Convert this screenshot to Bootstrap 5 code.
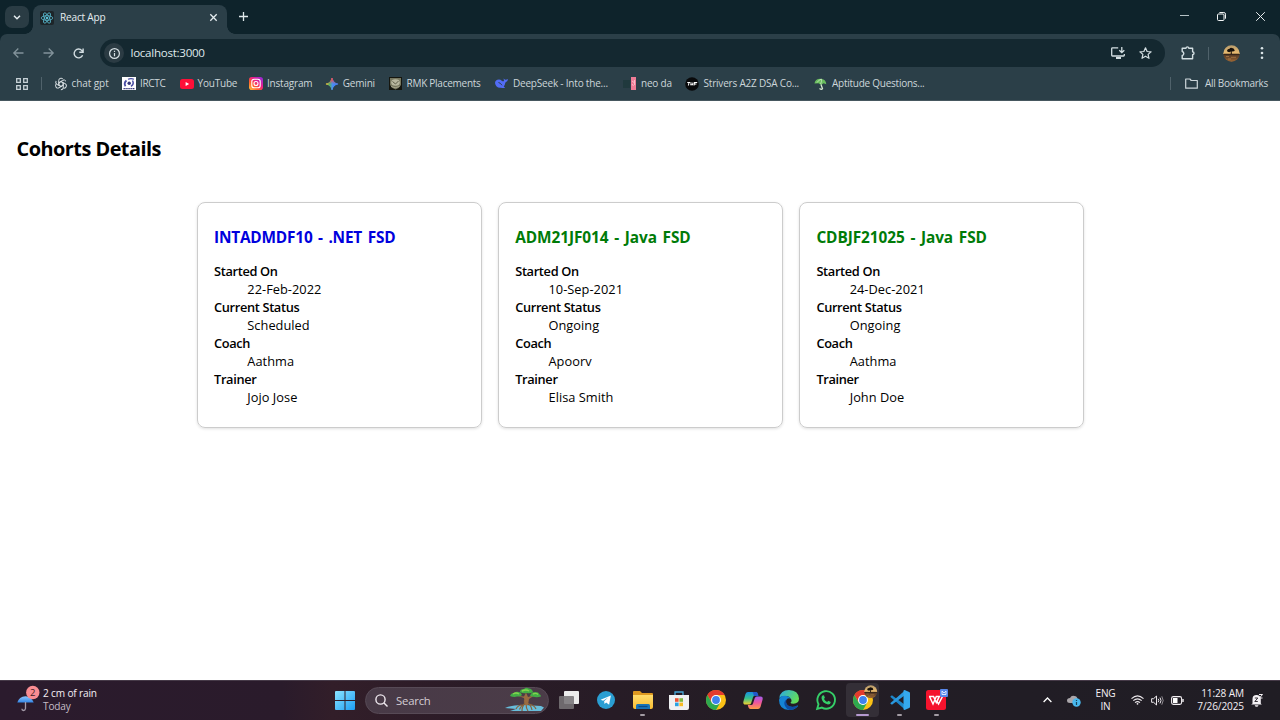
<!DOCTYPE html>
<html lang="en">
<head>
<meta charset="utf-8">
<title>React App</title>
<link rel="stylesheet" href="https://cdn.jsdelivr.net/npm/bootstrap@5.3.0/dist/css/bootstrap.min.css">
<style>
body{font-family:"Open Sans","Noto Sans",sans-serif;width:1280px;height:720px;overflow:hidden;background:#fff;color:#000}
svg{display:block;flex:none;overflow:visible}
.tabstrip{height:34px;background:#0e232b}
.tabsearch{width:24px;height:22px;border-radius:7px;background:#2a3c44;margin:6px 0 0 5px}
.browsertab{width:194px;height:29px;margin:5px 0 0 4px;padding-bottom:4px;background:#2b3f48;border-radius:8px 8px 0 0;font-size:10.1px;letter-spacing:-.2px;color:#e4ecef}
.browsertab::before,.browsertab::after{content:"";position:absolute;bottom:0;width:8px;height:8px}
.browsertab::before{left:-8px;background:radial-gradient(circle at 0 0,transparent 7.5px,#2b3f48 8px)}
.browsertab::after{right:-8px;background:radial-gradient(circle at 100% 0,transparent 7.5px,#2b3f48 8px)}
.toolstrip{background:#2b3f48;height:38px;position:relative;border-radius:7px 7px 0 0}
.toolwrap{background:#0e232b}
.address{width:1065px;height:28px;border-radius:14px;background:#142830;color:#dfe7ea;font-size:11.6px}
.infodot{width:20px;height:20px;border-radius:50%;background:#2b3b43}
.bookmarks{height:29px;background:#2b3f48;border-bottom:1px solid #46575f;color:#cdd6da;font-size:10px;letter-spacing:-.2px;padding-bottom:5px}
.bm{gap:4px;white-space:nowrap}
.vbar{width:1px;height:13px;background:#50626b}
.page{height:579px}
.page h1{font-size:19.9px;font-weight:700;line-height:28px;margin:0;padding:34px 0 0 16.5px;letter-spacing:-.52px}
.cohorts{margin:39px 0 0 197px;gap:16.4px}
.cohort{width:284.8px;height:226px;border:1px solid #ccc;border-radius:8px;box-shadow:0 1px 3px rgba(0,0,0,.12);padding:25px 16px 0}
.cohort h2{font-size:15.4px;font-weight:700;line-height:20px;margin:0 0 14px;white-space:nowrap;color:#007b08;letter-spacing:-.08px;word-spacing:1.8px}
.cohort h2.scheduled{color:#00d;letter-spacing:-.2px}
.cohort dl{font-size:12.8px;line-height:18px;margin:0}
.cohort dt{font-weight:600;letter-spacing:-.34px}
.cohort dd{margin:0 0 0 33.3px;letter-spacing:.03px}
.taskbar{height:40px;padding-bottom:1px;background:linear-gradient(90deg,#2b1b2d 0,#2a1b2b 22%,#321e29 26%,#2a1b27 38%,#241d25 58%,#211d25 80%,#201d24 100%);border-top:1px solid #463a48;color:#f4eff4;font-size:10.1px;line-height:13px}
.searchbox{width:184px;height:27px;border-radius:14px;background:linear-gradient(90deg,#483a47,#4b3c48);border:1px solid #574a56;font-size:11.3px;color:#d5cdd4}
.app{width:36.7px;height:38px;position:relative}
.app i{position:absolute;bottom:3px;left:50%;width:5px;height:2.4px;margin-left:-2.5px;border-radius:2px;background:#a39ca4}
.app.active::before{content:"";position:absolute;inset:2px 2px 2px 1px;border-radius:4px;background:#342f37}
.app.active i{width:13px;margin-left:-6.5px;background:#b59ad0}
.app svg{position:relative}
.at{position:absolute}
</style>
</head>
<body>
<svg width="0" height="0" class="at"><defs>
<linearGradient id="win" x1="0" y1="0" x2="1" y2="1"><stop stop-color="#8be4ff"/><stop offset="1" stop-color="#1c9cf3"/></linearGradient>
<linearGradient id="insta" x1="0" y1="1" x2="1" y2="0"><stop stop-color="#ffc83a"/><stop offset=".35" stop-color="#ff5a2c"/><stop offset=".6" stop-color="#ea1d8c"/><stop offset="1" stop-color="#8a2be8"/></linearGradient>
<linearGradient id="gem" x1="0" y1="0" x2="1" y2="0"><stop stop-color="#f5c331"/><stop offset=".3" stop-color="#53b26b"/><stop offset=".55" stop-color="#4a8df5"/><stop offset="1" stop-color="#3f7cf0"/></linearGradient>
<linearGradient id="gemr" x1="0" y1="0" x2="0" y2="1"><stop stop-color="#f0484b"/><stop offset=".5" stop-color="#f0484b" stop-opacity="0"/></linearGradient>
<linearGradient id="fold" x1="0" y1="0" x2="0" y2="1"><stop stop-color="#ffdc6b"/><stop offset="1" stop-color="#f8bd32"/></linearGradient>
<linearGradient id="cpl" x1="0" y1="0" x2="0" y2="1"><stop stop-color="#168fe5"/><stop offset=".5" stop-color="#35c28d"/><stop offset="1" stop-color="#f4d02c"/></linearGradient>
<linearGradient id="cpr" x1="0" y1="0" x2="0" y2="1"><stop stop-color="#a15cf0"/><stop offset=".5" stop-color="#f0559b"/><stop offset="1" stop-color="#ff9c45"/></linearGradient>
<linearGradient id="edg" x1="0" y1="0" x2="1" y2=".5"><stop stop-color="#29a9e6"/><stop offset="1" stop-color="#63dd59"/></linearGradient>
<linearGradient id="umb" x1="0" y1="0" x2="0" y2="1"><stop stop-color="#8cc6ff"/><stop offset="1" stop-color="#3487e6"/></linearGradient>
<linearGradient id="dusk" x1="0" y1="0" x2="0" y2="1"><stop stop-color="#b59a6c"/><stop offset=".5" stop-color="#edbd70"/><stop offset=".54" stop-color="#4d3524"/><stop offset=".75" stop-color="#6e4a2b"/><stop offset="1" stop-color="#a36a34"/></linearGradient>
<symbol id="chrome" viewBox="0 0 20 20"><circle cx="10" cy="10" r="10" fill="#fbc116"/><path d="M10 5h8.660A10 10 0 0 0 1.340 5l4.330 7.500z" fill="#e33b2e"/><path d="M1.340 5A10 10 0 0 0 10 20l4.330-7.500h-8.660z" fill="#2da94f"/><circle cx="10" cy="10" r="5" fill="#fff"/><circle cx="10" cy="10" r="3.900" fill="#3f82ee"/></symbol>
<symbol id="face" viewBox="0 0 17 17"><circle cx="8.500" cy="8.500" r="8.200" fill="url(#dusk)"/><path d="M4 5.500q.5-1.800 2.500-1.800Q7.500 2.300 9 3q2 0 2.200 1.500Q12.500 5.500 11 6.300L8.700 6.500l.2 2.500H7.700l.1-2.500-1.500.8Q4 7.200 4 5.500" fill="#17100b"/><path d="M.8 9.200h15.400" stroke="#2b1d14" stroke-width=".9"/><path d="M3 11.500h3M8 12.300h5M5 14h3" stroke="#c08a50" stroke-width=".6"/></symbol>
</defs></svg>

<header>
<div class="tabstrip d-flex">
  <div class="tabsearch d-flex align-items-center justify-content-center"><svg width="8" height="5" viewBox="0 0 8 5" fill="none" stroke="#e6edf0" stroke-width="1.5"><path d="m1 .8 3 3 3-3"/></svg></div>
  <div class="browsertab d-flex align-items-center position-relative">
    <svg style="margin-left:7px;margin-right:6px" width="14" height="14" viewBox="0 0 14 14"><rect width="14" height="14" rx="2" fill="#1d2529"/><g fill="none" stroke="#5cc3da" stroke-width=".75"><ellipse cx="7" cy="7" rx="5.8" ry="2.3"/><ellipse cx="7" cy="7" rx="5.8" ry="2.3" transform="rotate(60 7 7)"/><ellipse cx="7" cy="7" rx="5.8" ry="2.3" transform="rotate(120 7 7)"/></g><circle cx="7" cy="7" r="1.2" fill="#5cc3da"/></svg>
    <span>React App</span>
    <svg class="ms-auto" style="margin-right:10.5px" width="7" height="7" viewBox="0 0 7 7" stroke="#e6edf0" stroke-width="1.3"><path d="m.3.3 6.4 6.4M6.7.3.3 6.7"/></svg>
  </div>
  <svg style="margin:12px 0 0 12px" width="9" height="9" viewBox="0 0 9 9" stroke="#dfe8eb" stroke-width="1.3"><path d="M4.5 0v9M0 4.500h9"/></svg>
  <div class="ms-auto d-flex align-items-center" style="padding:0 15px 2px 0">
    <svg width="9" height="9" viewBox="0 0 9 9" stroke="#b6c2c7" stroke-width="1"><path d="M0 3.500h9"/></svg>
    <svg style="margin-left:28px" width="9" height="9" viewBox="0 0 9 9" fill="none" stroke="#f4f7f8" stroke-width="1"><rect x=".5" y="2" width="6.5" height="6.5" rx="1"/><path d="M2.400 .5h4.400q1.700 0 1.700 1.700v4.500"/></svg>
    <svg style="margin-left:30px" width="9" height="9" viewBox="0 0 9 9" stroke="#e9eef0" stroke-width="1"><path d="m.2.2 8.600 8.600M8.800.2.2 8.800"/></svg>
  </div>
</div>
<div class="toolwrap"><div class="toolstrip d-flex align-items-center">
  <svg style="margin-left:13px" width="11" height="10" viewBox="0 0 11 10" fill="none" stroke="#82939b" stroke-width="1.3"><path d="M10.500 5H1M5.300.5.8 5l4.500 4.500"/></svg>
  <svg style="margin-left:19px" width="11" height="10" viewBox="0 0 11 10" fill="none" stroke="#82939b" stroke-width="1.3"><path d="M.5 5H10M5.700.5 10.200 5 5.700 9.500"/></svg>
  <svg style="margin-left:19px" width="11" height="11" viewBox="0 0 11 11" fill="none" stroke="#d3dee2" stroke-width="1.4"><path d="M9.600 7.200A4.400 4.400 0 1 1 8.900 2.600L10 3.800M10.100.4v3.900H6.300"/></svg>
  <div class="address d-flex align-items-center" style="margin-left:16px">
    <div class="infodot d-flex align-items-center justify-content-center" style="margin-left:4px"><svg width="11" height="11" viewBox="0 0 11 11" fill="none" stroke="#d6e0e4" stroke-width="1.200"><circle cx="5.500" cy="5.500" r="4.900"/><path d="M5.500 5v3.200M5.500 2.700V4"/></svg></div>
    <span style="margin-left:6.500px;letter-spacing:-.28px">localhost:3000</span>
    <svg class="ms-auto" width="14" height="12" viewBox="0 0 14 12" fill="none" stroke="#d3dee2" stroke-width="1.300"><path d="M7.200.8H1.400Q.7.8.7 1.500v6.800q0 .7.700.7h11.200q.7 0 .7-.7V7M10.800 0v5.300M8.300 3.200l2.500 2.500 2.500-2.500"/><path d="M5 11h5" stroke-width="2"/></svg>
    <svg style="margin:0 13.500px 0 13.500px" width="13" height="12" viewBox="0 0 13 12" fill="none" stroke="#d3dee2" stroke-width="1.200" stroke-linejoin="round"><path d="m6.500.8 1.600 3.700 4 .3-3 2.600.9 3.900-3.500-2.100L3 11.300l.9-3.900-3-2.600 4-.3z"/></svg>
  </div>
  <svg style="margin-left:15.500px" width="14" height="14" viewBox="0 0 14 14" fill="none" stroke="#d3dee2" stroke-width="1.400" stroke-linejoin="round"><path d="M1.200 2.200h3.800q.2-1.300 1.400-1.300t1.400 1.300h3.800v3.600q1.400.2 1.400 1.500t-1.400 1.500v4H1.200V9.500Q2.800 9.200 2.800 7.500T1.200 5.500z"/></svg>
  <div class="vbar" style="margin-left:13.500px"></div>
  <svg style="margin-left:13.500px" width="17" height="17"><use href="#face"/></svg>
  <svg style="margin-left:20px" width="4" height="12" viewBox="0 0 4 12" fill="#dbe5e8"><circle cx="2" cy="1.300" r="1.300"/><circle cx="2" cy="6" r="1.300"/><circle cx="2" cy="10.700" r="1.300"/></svg>
</div></div>
<div class="bookmarks d-flex align-items-center">
  <svg style="margin-left:16px" width="12" height="12" viewBox="0 0 12 12" fill="none" stroke="#c6d1d6" stroke-width="1.300"><path d="M.7.7h3.600v3.600H.7zM7.700.7h3.600v3.600H7.700zM.7 7.700h3.600v3.600H.7zM7.700 7.700h3.600v3.600H7.700z"/></svg>
  <div class="vbar" style="margin:0 12px 0 12.500px"></div>
  <div class="bm d-flex align-items-center" style="width:68.500px"><svg width="14" height="14" viewBox="0 0 14 14" fill="none" stroke="#dce3e6" stroke-width=".95"><g id="petal"><path d="M4.700 8.300V3.600Q4.700 1.200 7 1.200q1.500 0 2.300 1.200M4.700 5.700 8.800 3.300q2-1 3.200 1"/></g><use href="#petal" transform="rotate(120 7 7)"/><use href="#petal" transform="rotate(240 7 7)"/><path d="m7 4.700 2 1.150v2.300L7 9.300 5 8.150v-2.300z"/></svg><span style="letter-spacing:-.08px">chat gpt</span></div>
  <div class="bm d-flex align-items-center" style="width:57.500px"><svg width="14" height="13" viewBox="0 0 14 13"><path fill="#fff" d="M0 0h14v13H0z"/><g fill="none" stroke="#4a4fa5"><path d="M3.500 9.200Q1.500 6 4.500 3.500" stroke-width="1.800"/><path d="M10.500 3.500Q12.500 7 9 9.300" stroke-width="1.500"/><path d="M6 2.200q3-1.200 6 0" stroke-width="1.200"/></g><circle cx="7.200" cy="6.300" r="1.700" fill="#34367a"/><path d="M1.500 11.700h11" stroke="#34367a" stroke-width="1.300" stroke-dasharray="1.400 .5"/></svg><span style="letter-spacing:-.3px">IRCTC</span></div>
  <div class="bm d-flex align-items-center" style="width:69.500px"><svg width="14" height="10" viewBox="0 0 14 10"><rect width="14" height="10" rx="2.500" fill="#ff0f38"/><path d="m5.600 3 3.600 2-3.600 2z" fill="#fff"/></svg><span>YouTube</span></div>
  <div class="bm d-flex align-items-center" style="width:76.800px"><svg width="14" height="13" viewBox="0 0 14 13"><rect width="14" height="13" rx="2.800" fill="url(#insta)"/><g fill="none" stroke="#fff" stroke-width="1.100"><rect x="2.800" y="2.300" width="8.400" height="8.400" rx="2.300"/><circle cx="7" cy="6.500" r="2"/></g></svg><span>Instagram</span></div>
  <div class="bm d-flex align-items-center" style="width:63.200px;gap:5px"><svg width="12" height="12" viewBox="0 0 12 12"><path d="M6 0Q6.700 5.300 12 6 6.700 6.700 6 12 5.300 6.700 0 6 5.300 5.300 6 0" fill="url(#gem)" stroke="url(#gem)" stroke-width="1.200"/><path d="M6 0Q6.700 5.300 12 6 6.700 6.700 6 12 5.300 6.700 0 6 5.300 5.300 6 0" fill="url(#gemr)" stroke="url(#gemr)" stroke-width="1.200"/></svg><span>Gemini</span></div>
  <div class="bm d-flex align-items-center" style="width:106px;gap:4.500px"><svg width="13" height="13" viewBox="0 0 13 13"><path fill="#15160f" d="M0 0h13v13H0z"/><path d="M1 1h11v7q-2 3.500-5.500 4.500Q3 11.500 1 8z" fill="#77775f"/><ellipse cx="6.500" cy="5.500" rx="4.300" ry="3.300" fill="#b8b79f"/><path d="m3.500 4.500 3 2.500 3-3" fill="none" stroke="#55553f" stroke-width=".9"/><path d="M2 9.500q4 2.500 8.500 0" fill="none" stroke="#a8a68c"/></svg><span style="letter-spacing:-.26px">RMK Placements</span></div>
  <div class="bm d-flex align-items-center" style="width:128.500px;gap:5px"><svg width="13" height="11" viewBox="0 0 13 11"><path d="M0 5Q.2 1.700 4 1.500q1.700 0 2.700 1.200Q8 3.600 9 3q0-1.600-.6-2.600 1.100.7 1.900 1.400Q11.500 2 13 1q-.2 3-2.600 3.600Q10 7 8.700 8.500l1.500 1.200Q7.500 10.500 6.200 9.700 1 10.500 0 5" fill="#526cf5"/><path d="M3.500 4.500q2 .3 3.500 2.800" fill="none" stroke="#2b3f48" stroke-width="1"/></svg><span>DeepSeek - Into the...</span></div>
  <div class="bm d-flex align-items-center" style="width:62px;gap:4.500px"><svg width="13" height="13" viewBox="0 0 13 13"><path fill="#20393d" d="M0 3h7v8H0z"/><path fill="#ef7c96" d="M8 0h5v13H8z"/><path d="m9 4 2 1.500M11.500 3v5M9 7l1.500 2" stroke="#fbc9d4" stroke-width=".8"/></svg><span>neo da</span></div>
  <div class="bm d-flex align-items-center" style="width:128.500px"><svg width="14" height="14" viewBox="0 0 14 14"><circle cx="7" cy="7" r="6.800" fill="#090a0b"/><path d="M2.300 5.500h3M4 5.500 3.400 8.500M6.200 5.500 5.800 7.700h1.800L8 5.500M9 8.500l.5-3h2.700M9.400 7h2" fill="none" stroke="#fff" stroke-width="1.050"/></svg><span>Strivers A2Z DSA Co...</span></div>
  <div class="bm d-flex align-items-center" style="gap:5px"><svg width="13" height="12" viewBox="0 0 13 12"><path d="M.5 5.600Q1 .7 6.400.7 12 1 12.300 6.200L9.600 5.300 7 7 4.600 5.300z" fill="#69be5e"/><path d="M3 4.600Q5 1.500 7.500 1M6.600 6Q8 3.300 7.300 1" fill="none" stroke="#e7f5dc" stroke-width=".6"/><path d="m7 6.500 1.500 4.200Q7.500 12 5.500 10.500" fill="none" stroke="#d6e7d0" stroke-width="1.300"/></svg><span style="letter-spacing:-.25px">Aptitude Questions...</span></div>
  <div class="vbar ms-auto"></div>
  <div class="bm d-flex align-items-center" style="margin:0 12px 0 14px;gap:7px"><svg width="13" height="11" viewBox="0 0 13 11" fill="none" stroke="#cdd6da" stroke-width="1.200" stroke-linejoin="round"><path d="M.7 1h4.200l1.300 1.500h6.100v7.700H.7z"/></svg><span style="letter-spacing:-.28px">All Bookmarks</span></div>
</div>
</header>

<main class="page">
  <h1>Cohorts Details</h1>
  <div class="cohorts d-flex">
    <section class="cohort"><h2 class="scheduled">INTADMDF10 - .NET FSD</h2><dl><dt>Started On</dt><dd>22-Feb-2022</dd><dt>Current Status</dt><dd>Scheduled</dd><dt>Coach</dt><dd>Aathma</dd><dt>Trainer</dt><dd>Jojo Jose</dd></dl></section>
    <section class="cohort"><h2>ADM21JF014 - Java FSD</h2><dl><dt>Started On</dt><dd>10-Sep-2021</dd><dt>Current Status</dt><dd>Ongoing</dd><dt>Coach</dt><dd>Apoorv</dd><dt>Trainer</dt><dd>Elisa Smith</dd></dl></section>
    <section class="cohort"><h2>CDBJF21025 - Java FSD</h2><dl><dt>Started On</dt><dd>24-Dec-2021</dd><dt>Current Status</dt><dd>Ongoing</dd><dt>Coach</dt><dd>Aathma</dd><dt>Trainer</dt><dd>John Doe</dd></dl></section>
  </div>
</main>

<footer class="taskbar d-flex align-items-center">
  <div class="d-flex align-items-center" style="width:334px">
    <svg style="margin-left:17px" width="23" height="26" viewBox="0 0 23 26"><path d="M.3 15.500Q2 9.500 8.500 9.200q6 .5 8.200 6.300z" fill="url(#umb)"/><path d="M8.500 15v6.500q-.3 2-2 2-1.600-.1-1.600-1.700" fill="none" stroke="#a39aa8" stroke-width="1.300"/><circle cx="15.800" cy="5.500" r="6.700" fill="#f98c92"/><text x="13" y="9.200" font-size="9.500" fill="#401c24">2</text></svg>
    <div style="margin-left:3px;letter-spacing:-.16px"><div>2 cm of rain</div><div style="color:#c5bdc6">Today</div></div>
  </div>
  <svg width="20" height="19" viewBox="0 0 20 19" fill="url(#win)" style="margin-left:1px"><path d="M0 1q0-1 1-1h8.500v9H0zM10.500 0H19q1 0 1 1v8h-9.500zM0 10h9.500v9H1q-1 0-1-1zM10.500 10H20v8q0 1-1 1h-8.500z"/></svg>
  <div class="searchbox d-flex align-items-center" style="margin-left:10px">
    <svg style="margin-left:9px" width="13" height="13" viewBox="0 0 13 13" fill="none" stroke="#efe9ef" stroke-width="1.400"><circle cx="5.500" cy="5.500" r="4.600"/><path d="m9 9 3.500 3.500"/></svg>
    <span style="margin-left:8px;letter-spacing:-.2px">Search</span>
    <svg class="ms-auto" style="margin-right:2px" width="41" height="24" viewBox="0 0 41 24"><path d="M0 20q8-3.500 20-3l16 1 3 1.500-3 3.500H5L11 21z" fill="#68bddb"/><path d="M19.500 12v4q-3 1-5 5.500M20 16q-3 2-3 7M21 16q0 4 2 7M22 15q4 1.500 5 7M23 16q6 .5 8 5M17 17q-4 0-6 4" fill="none" stroke="#87613c" stroke-width="1.200"/><path d="M20 17 19 10l-6-2 6 .5 2-4 2 4.500 7-2-6 4-1 6z" fill="#9a6b40"/><path d="M5 8q1-3 4-3 2-2 5-1 2 0 3 3-2 2-5 1.500Q9 9.500 5 8M15 4q0-3 4-3 2-2 5-.5 3 0 4 3.500-3 2-6 1-4 1-7-1M25 8q1-4 5-4 4 0 4 2 2 .5 2 2.500-5 1.500-11-.5" fill="#43ad45"/><path d="M8 6q3-2 6 0M17 3q4-2 7 0M28 6q3-1.500 5 .5" stroke="#83d34e" stroke-width="1.400" fill="none"/></svg>
  </div>
  <div class="d-flex" style="margin-left:2px">
    <div class="app d-flex align-items-center justify-content-center"><svg width="20" height="18" viewBox="0 0 20 18"><rect x="5" width="15" height="13" rx="1" fill="#ececec"/><rect y="5" width="15" height="13" rx="1" fill="#777477" opacity=".88"/></svg></div>
    <div class="app d-flex align-items-center justify-content-center"><svg width="18" height="18" viewBox="0 0 18 18"><circle cx="9" cy="9" r="9" fill="#2a9ed2"/><path d="m3.600 8.700 10.300-4.200-1.800 9.200-3-2.200-1.500 1.500-.5-2.800 4-3.600-5 3.200z" fill="#fff"/></svg></div>
    <div class="app d-flex align-items-center justify-content-center"><svg width="20" height="18" viewBox="0 0 20 18"><path d="M0 1q0-1 1-1h6l2 2h10q1 0 1 1v6H0z" fill="#de9920"/><path d="M0 4h20v12q0 2-2 2H2q-2 0-2-2z" fill="url(#fold)"/><path d="M3 18v-3.500q0-1.500 1.500-1.500h11q1.500 0 1.500 1.500V18z" fill="#1773b8"/><path d="M5.500 15.500h9" stroke="#0d4b84" stroke-width="1.200"/></svg><i></i></div>
    <div class="app d-flex align-items-center justify-content-center"><svg width="20" height="19" viewBox="0 0 20 19"><path d="M6 4V1h8v3" fill="none" stroke="#47a8d9" stroke-width="1.300"/><path d="M0 4h20v13q0 2-2 2H2q-2 0-2-2z" fill="#f0f1f3"/><path fill="#ee5334" d="M6 7.200h3.600v3.600H6z"/><path fill="#7db83f" d="M10.400 7.200H14v3.600h-3.600z"/><path fill="#2aa2e2" d="M6 11.600h3.600v3.600H6z"/><path fill="#f8bb25" d="M10.400 11.600H14v3.600h-3.600z"/></svg></div>
    <div class="app d-flex align-items-center justify-content-center"><svg width="20" height="20"><use href="#chrome"/></svg></div>
    <div class="app d-flex align-items-center justify-content-center"><svg width="20" height="17" viewBox="0 0 20 17"><path d="M5 0h7.500q1.700 0 2.200 2l.5 1.600H12q-1.500 0-2 1.600L8.200 11q-.6 1.600-2 1.600H2.500Q-.3 12.600.4 9.500L2.500 2Q3.200 0 5 0" fill="url(#cpl)"/><path d="M15 17H7.500q-1.700 0-2.200-2l-.5-2H8q1.500 0 2-1.600L11.800 6q.6-1.600 2-1.600h3.700q2.800 0 2.100 3.100L17.500 15Q16.800 17 15 17" fill="url(#cpr)"/><path d="M9.500 0H13q1.500 0 2 2l.5 2H12q-1.500 0-1.500-1.500Q10.500 1 9.500 0" fill="#2157ca"/></svg></div>
    <div class="app d-flex align-items-center justify-content-center"><svg width="20" height="20" viewBox="0 0 20 20"><path d="M.3 8Q1.500 0 10 0q9.500.4 10 8.500 0 5-5.500 5.200-3 0-3-1 1.700-1.400.8-3.300Q10.500 6 6.500 6 2 6 .3 8" fill="url(#edg)"/><path d="M0 10Q.5 5.500 6.500 5.700q4 .3 5.500 3Q8.500 7 7 10.500q-.7 4.200 3.500 6 4 1.200 7.500-.8 1.500-.5.7.8Q15.500 20 10 20 0 19.500 0 10" fill="#1584d5"/><path d="M7.500 9.300Q4 12 6 16q1.500 3 4.500 4 5.500 0 8-4 .2-1-1-.3-4 1.800-7.500.3-4-2-2.500-6.700" fill="#0d4da4"/></svg></div>
    <div class="app d-flex align-items-center justify-content-center"><svg width="20" height="20" viewBox="0 0 20 20" fill="none" stroke="#35ce68" stroke-width="1.900"><path d="m1.200 18.800 1.300-4.600A8.800 8.800 0 1 1 5.900 17.600z"/><path d="M6.500 5.600q1.600-.8 1.900.8l.5 1.400-.9 1.300q1.100 2 3.100 2.900l1.200-1.200 2.500 1.200q-.2 2.500-2.800 2.500-6-1.300-6.500-6.500 0-1.500 1-2.400" fill="#35ce68" stroke="none"/></svg></div>
    <div class="app active d-flex align-items-center justify-content-center"><svg width="20" height="20" viewBox="0 0 20 20"><use href="#chrome" width="20" height="20"/><use href="#face" x="11" y="-5" width="13.500" height="13.500"/></svg><i></i></div>
    <div class="app d-flex align-items-center justify-content-center"><svg width="20" height="20" viewBox="0 0 20 20"><path d="m.2 6.700 1.700-1.500L15.200 15v4.800z" fill="#1c86ca"/><path d="m.2 13.300 1.700 1.500L15.200 5V.2z" fill="#2a99df"/><path d="m14.500 0 4.700 2q.8.400.8 1.300v13.400q0 .9-.8 1.300l-4.700 2q-1 0-1-1V1q0-1 1-1" fill="#35a9ee"/></svg><i></i></div>
    <div class="app d-flex align-items-center justify-content-center"><svg width="20" height="20" viewBox="0 0 20 20"><rect width="20" height="20" rx="2.500" fill="#f5132d"/><path d="M3 6.500h4.500l2.800 6 2.200-4.500M3.500 6.500 7 14l3.300-7.500h3L11 11.500l1.500 2.500 4-7.500" fill="none" stroke="#fff" stroke-width="1.500"/><rect x="14" y="-1" width="8" height="8" rx="1" fill="#5887ea"/><path d="M16 1v3.500h4V1L18 3z" fill="none" stroke="#e8efff" stroke-width=".9"/></svg><i></i></div>
  </div>
  <svg class="ms-auto" width="9" height="6" viewBox="0 0 9 6" fill="none" stroke="#fff" stroke-width="1.300"><path d="m.6 5 3.900-4 3.900 4"/></svg>
  <svg style="margin-left:15px" width="14" height="13" viewBox="0 0 14 13"><path d="M3 9Q0 9 0 6.500T3 4Q4.500 1 7.500 2 10 2 10.500 5q2.500 0 2.500 2.500T10 9" fill="#aaa6aa"/><circle cx="9.500" cy="8.500" r="4.200" fill="#48b8ee"/><path d="M9.500 8v3M9.500 6v1" stroke="#18465e" stroke-width="1.200"/></svg>
  <div class="text-center" style="width:24px;margin-left:12.500px;letter-spacing:-.15px"><div>ENG</div><div>IN</div></div>
  <svg style="margin-left:13px" width="13" height="10" viewBox="0 0 13 10" fill="none" stroke="#ece8ec" stroke-width="1.100"><path d="M.5 3.700q6-5.500 12 0M2.300 5.700q4.200-3.700 8.400 0M4 7.600q2.500-2 5 0"/><circle cx="6.500" cy="8.800" r=".9" fill="#ece8ec" stroke="none"/></svg>
  <svg style="margin-left:7px" width="13" height="11" viewBox="0 0 13 11" fill="none" stroke="#ece8ec" stroke-width="1"><path d="M.6 3.700h2L5.500 1v9L2.600 7.300h-2zM7.200 3.800q1.200 1.700 0 3.400M9 2.600q2 2.900 0 5.800"/><path d="M10.800 1.300q2.800 4.200 0 8.400" opacity=".55"/></svg>
  <svg style="margin-left:7.500px" width="13" height="9" viewBox="0 0 13 9" fill="none" stroke="#f3eff3" stroke-width="1.100"><rect x=".6" y=".6" width="10" height="7.800" rx="1.800"/><path d="M12 3v3" stroke-width="1.400"/><rect x="2" y="2" width="4.500" height="5" fill="#fff" stroke="none"/></svg>
  <div class="text-end" style="width:52px;margin-left:8px;white-space:nowrap;letter-spacing:-.12px"><div>11:28 AM</div><div>7/26/2025</div></div>
  <svg style="margin:0 17px 0 7px" width="12" height="13" viewBox="0 0 12 13"><path d="M1.500 9.500V5Q1.500 1 5.500 1T9.800 5v4.500l1 1H.2zM3.700 11.300h3.800q-.3 1.500-1.900 1.500t-1.900-1.500" fill="#f4f1f5"/><path d="M3.800 4h3L3.800 7.500h3" fill="none" stroke="#241f27" stroke-width=".9"/><path d="M8 .5h3.500L8.500 4h3" fill="none" stroke="#f4f1f5" stroke-width="1"/></svg>
</footer>
<script src="https://cdn.jsdelivr.net/npm/bootstrap@5.3.0/dist/js/bootstrap.bundle.min.js"></script>
</body>
</html>
